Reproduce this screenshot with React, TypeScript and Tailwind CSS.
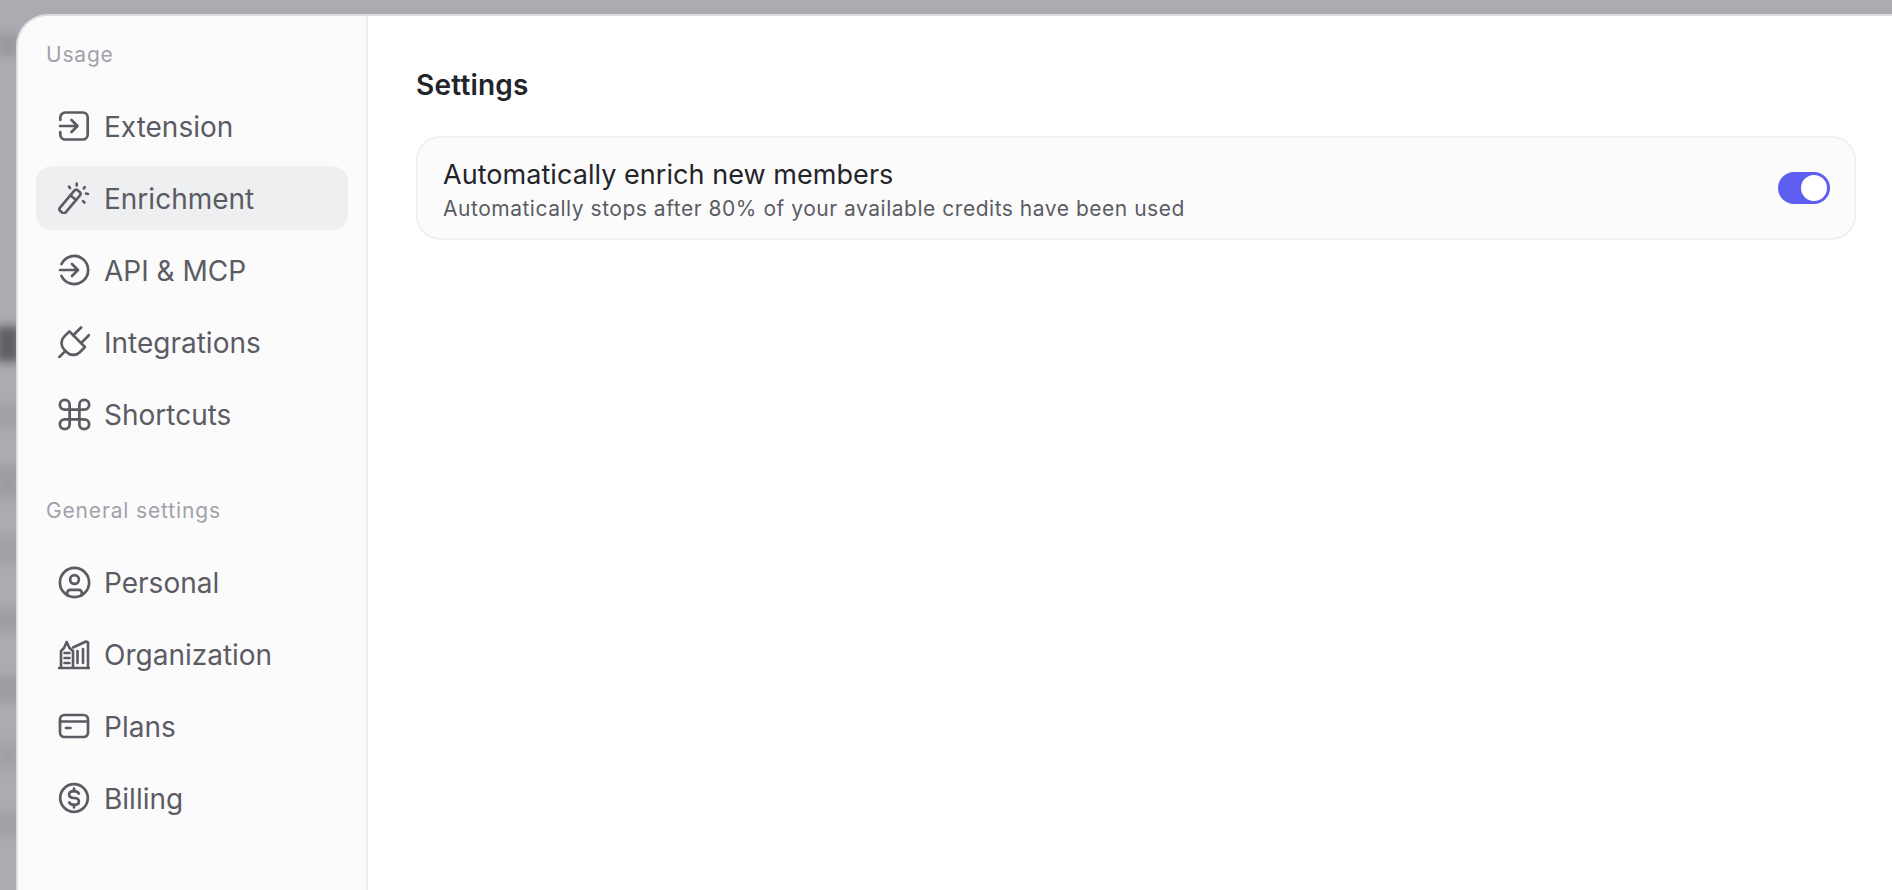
import { CircleUser, Command } from "lucide-react";
import type { ReactNode } from "react";

const stroke = {
  fill: "none",
  stroke: "currentColor",
  strokeWidth: 2.7,
  strokeLinecap: "round" as const,
  strokeLinejoin: "round" as const,
};

function ExtensionIcon() {
  return (
    <svg width="32" height="32" viewBox="0 0 32 32" {...stroke}>
      <path d="M2.300 10V7.500A5 5 0 0 1 7.300 2.500h17.400a5 5 0 0 1 5 5v17a5 5 0 0 1-5 5H7.300a5 5 0 0 1-5-5V22" />
      <path d="M2 16h17M13.500 10l6 6-6 6" />
    </svg>
  );
}

function WandIcon() {
  return (
    <svg width="32" height="32" viewBox="0 0 32 32" {...stroke} strokeWidth={2.6}>
      <g transform="rotate(-50 12 19.500)">
        <rect x="-1.500" y="15.800" width="27" height="7.400" rx="2.400" />
        <path d="M17 15.800v7.400" />
      </g>
      <path d="M18.700 1.500v2M11 4.500l1 1.600M26.800 5l-1 1.400M30 12l-2-.4M26.500 20.500l-1.500-1.300" />
    </svg>
  );
}

function ApiIcon() {
  return (
    <svg width="32" height="32" viewBox="0 0 32 32" {...stroke}>
      <path d="M3.500 10a14 14 0 1 1 0 12" />
      <path d="M2 16h18M14 10l6 6-6 6" />
    </svg>
  );
}

function PlugIcon() {
  return (
    <svg width="32" height="32" viewBox="4.400 2 17.400 17.400" {...stroke} strokeWidth={1.45}>
      <g transform="rotate(45 12 12)">
        <path d="M12 22v-5M9 8V2M15 8V2" />
        <path d="M18 8v4a5 5 0 0 1-5 5h-2a5 5 0 0 1-5-5V8Z" />
      </g>
    </svg>
  );
}

function OrgIcon() {
  return (
    <svg width="32" height="32" viewBox="0 0 32 32" {...stroke} strokeWidth={2.6}>
      <path d="M1 30h30" />
      <path d="M3 29V13l3-3 2.700-6L11.500 10l3.500 3v16" />
      <path d="M15 9.500 28 3.500l2 1V29" />
      <path d="M6.500 15h5M6.500 20h5M6.500 25h5" />
      <path d="M19.500 13v12M25 11v14" />
    </svg>
  );
}

function CardIcon() {
  return (
    <svg width="32" height="32" viewBox="0 0 32 32" {...stroke}>
      <rect x="2" y="5" width="28" height="22" rx="4.500" />
      <path d="M2 11.500h28M8 18h4.500" />
    </svg>
  );
}

function DollarIcon() {
  return (
    <svg width="32" height="32" viewBox="0 0 32 32" {...stroke}>
      <circle cx="16" cy="16" r="13.800" />
      <path d="M20.800 11.500C20 10 18.300 9.200 16 9.200c-2.900 0-4.900 1.300-4.900 3.400S13.100 16 16 16s4.900 1.300 4.900 3.400-2 3.400-4.900 3.400c-2.300 0-4-.8-4.800-2.300" />
      <path d="M16 6.500v2.700M16 22.800v2.700" />
    </svg>
  );
}

function NavItem({ icon, label, active }: { icon: ReactNode; label: string; active?: boolean }) {
  return (
    <div className={`flex h-16 items-center gap-[14px] rounded-2xl pl-[22px] text-[28px] text-[#5b5c63] ${active ? "bg-[#eeeff1]" : ""}`}>
      <span className="flex w-8 justify-center">{icon}</span>
      <span className="pt-[1px]">{label}</span>
    </div>
  );
}

// blurred page behind the modal, only the left strip shows
const spots = [
  { top: "top-[34px]", size: "h-[22px] bg-[#98999e]" },
  { top: "top-[326px]", size: "h-[36px] bg-[#5f6065]" },
  { top: "top-[402px]", size: "h-[26px] bg-[#a0a1a6]" },
  { top: "top-[466px]", size: "h-[32px] bg-[#9c9da2]" },
  { top: "top-[536px]", size: "h-[28px] bg-[#a0a1a6]" },
  { top: "top-[608px]", size: "h-[24px] bg-[#9c9da2]" },
  { top: "top-[676px]", size: "h-[26px] bg-[#9c9da2]" },
  { top: "top-[742px]", size: "h-[28px] bg-[#a0a1a6]" },
  { top: "top-[812px]", size: "h-[24px] bg-[#a0a1a6]" },
];

export default function App() {
  return (
    <div className="relative h-[890px] w-[1892px] overflow-hidden bg-[#abacb1] pl-4 pt-[14px] font-['Inter',sans-serif]">
      {spots.map((s) => (
        <div key={s.top} className={`absolute -left-1 w-6 blur-[5px] ${s.top} ${s.size}`} />
      ))}
      <div className="relative flex h-[900px] rounded-tl-[32px] border-l-2 border-t-2 border-[#dcdde1] bg-white">
        <aside className="w-[350px] shrink-0 rounded-tl-[30px] border-r-2 border-[#eeeff1] bg-[#fbfbfc] px-[18px] pt-[24px]">
          <div className="pl-[10px] text-[21px] leading-[30px] tracking-[0.8px] text-[#a1a2a9]">Usage</div>
          <nav className="mt-[24px] flex flex-col gap-2">
            <NavItem icon={<ExtensionIcon />} label="Extension" />
            <NavItem icon={<WandIcon />} label="Enrichment" active />
            <NavItem icon={<ApiIcon />} label="API & MCP" />
            <NavItem icon={<PlugIcon />} label="Integrations" />
            <NavItem icon={<Command className="shrink-0" size={39} strokeWidth={1.7} />} label="Shortcuts" />
          </nav>
          <div className="mt-[50px] pl-[10px] text-[21px] leading-[30px] tracking-[0.85px] text-[#a1a2a9]">General settings</div>
          <nav className="mt-[24px] flex flex-col gap-2">
            <NavItem icon={<CircleUser className="shrink-0" size={35} strokeWidth={1.85} />} label="Personal" />
            <NavItem icon={<OrgIcon />} label="Organization" />
            <NavItem icon={<CardIcon />} label="Plans" />
            <NavItem icon={<DollarIcon />} label="Billing" />
          </nav>
        </aside>
        <main className="flex-1 pl-[48px] pr-[36px] pt-[51px]">
          <h1 className="text-[28px] font-semibold leading-[36px] tracking-[0.2px] text-[#232429]">Settings</h1>
          <div className="mt-[33px] flex h-[104px] items-center justify-between rounded-[24px] border-2 border-[#f0f0f1] bg-[#fbfbfb] pl-[25px] pr-[24px]">
            <div className="pt-[4px]">
              <div className="pt-[1px] text-[27px] leading-[34px] tracking-[0.05px] text-[#232429]">Automatically enrich new members</div>
              <div className="mt-[3px] text-[21px] leading-[28px] tracking-[0.52px] text-[#5b5c63]">Automatically stops after 80% of your available credits have been used</div>
            </div>
            <div className="flex h-8 w-[52px] items-center justify-end rounded-full bg-[#5e5ef0] pr-[3px]">
              <div className="h-[26px] w-[26px] rounded-full bg-white" />
            </div>
          </div>
        </main>
      </div>
    </div>
  );
}
